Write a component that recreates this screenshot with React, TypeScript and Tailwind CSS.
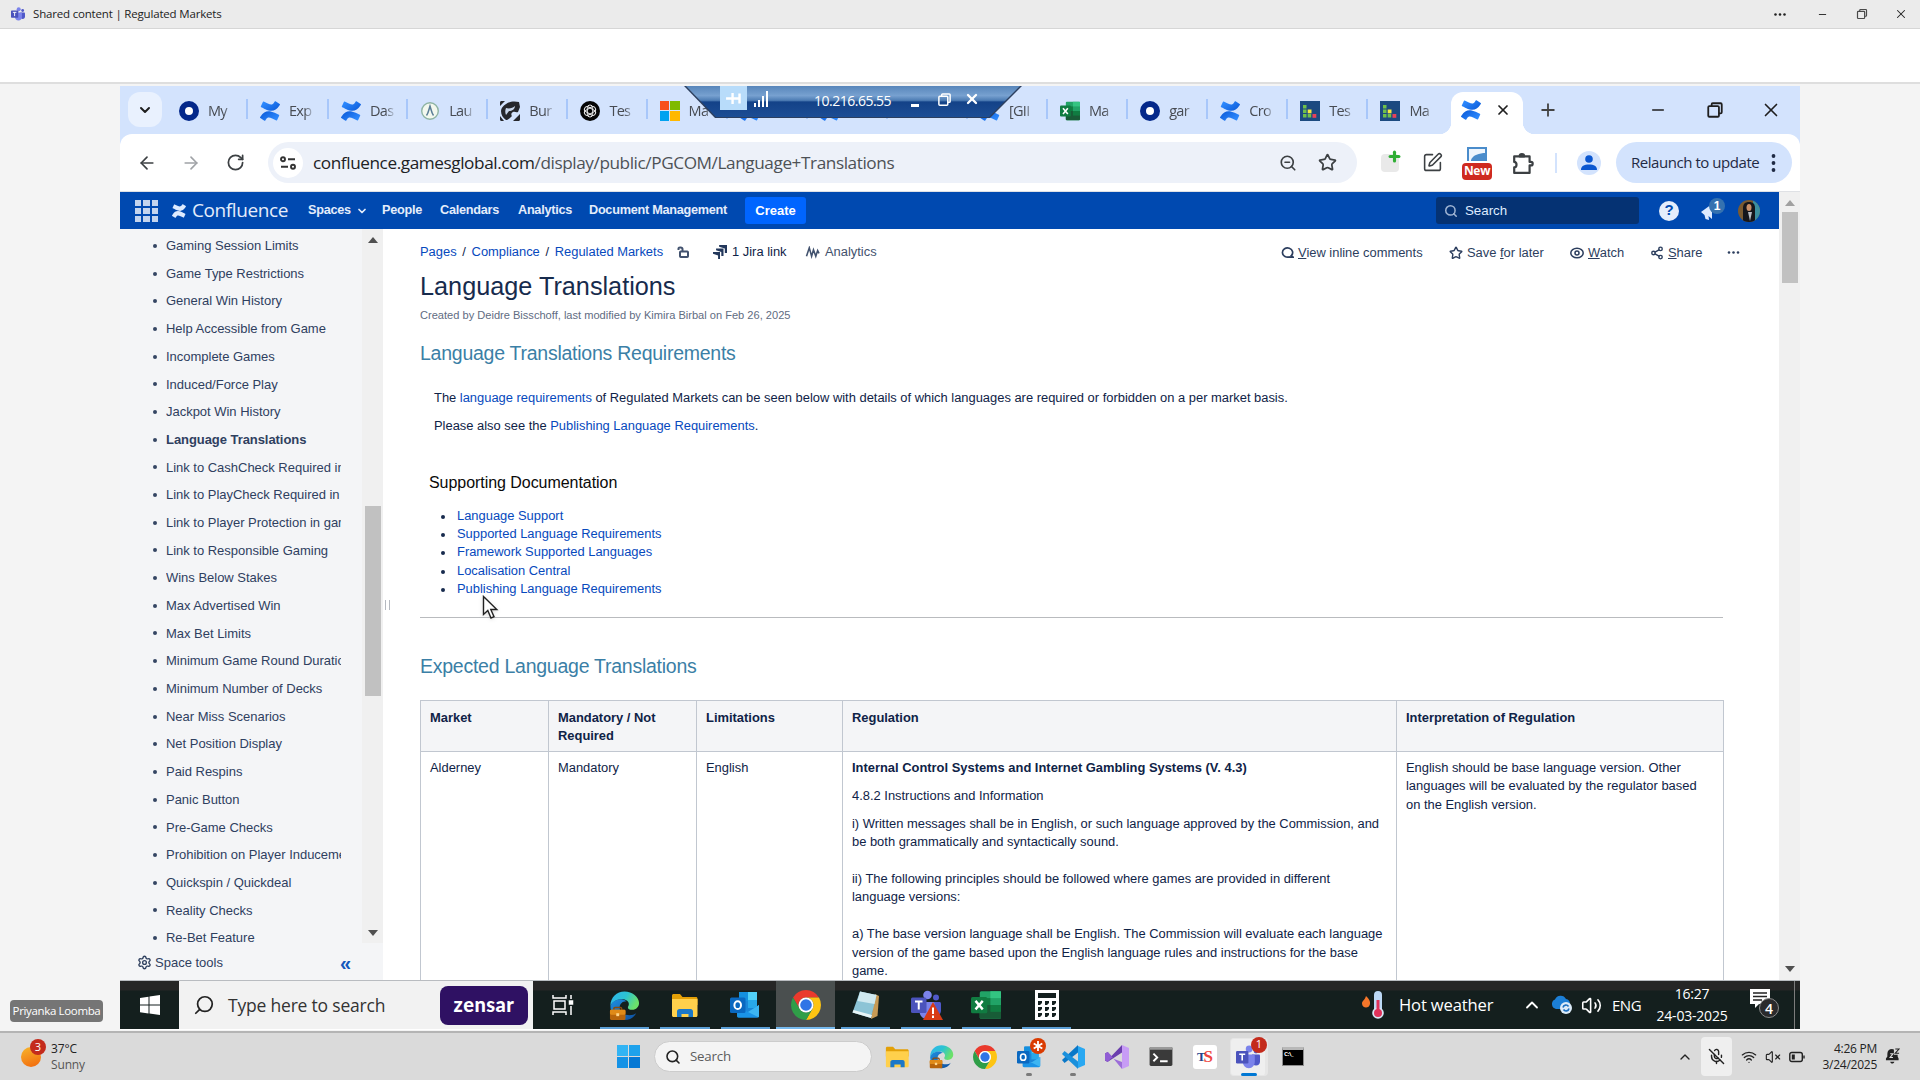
import React from "react";
import {
  ArrowLeft, ArrowRight, RotateCw, Minus, X, Plus, ChevronDown, ChevronUp, Search, Star, ZoomOut,
  SquarePen, Settings, Share2, Wifi, Volume2, VolumeX, MicOff,
} from "lucide-react";

type P = { className?: string };

const CONFLUENCE_A =
  "M.87 18.257c-.248.382-.53.875-.763 1.245a.764.764 0 0 0 .255 1.04l4.965 3.054a.764.764 0 0 0 1.058-.26c.199-.332.454-.763.733-1.221 1.967-3.247 3.945-2.853 7.508-1.146l4.957 2.337a.764.764 0 0 0 1.028-.382l2.364-5.346a.764.764 0 0 0-.382-1 599.851 599.851 0 0 1-4.965-2.361C10.911 10.97 5.224 11.185.87 18.257z";
const CONFLUENCE_B =
  "M23.131 5.743c.249-.405.531-.875.764-1.25a.764.764 0 0 0-.256-1.034L18.675.404a.764.764 0 0 0-1.058.26c-.195.335-.451.763-.734 1.225-1.966 3.246-3.945 2.85-7.508 1.146L4.437.694a.764.764 0 0 0-1.027.382L1.046 6.422a.764.764 0 0 0 .382 1c1.039.49 3.105 1.467 4.965 2.361 6.698 3.246 12.392 3.029 16.738-4.04z";

const ConfluenceIcon = ({ className = "size-5 text-[#2684ff]" }: P) => (
  <svg viewBox="0 0 24 24" className={className} fill="currentColor">
    <path d={CONFLUENCE_A} />
    <path d={CONFLUENCE_B} />
  </svg>
);
const ConfluenceTab = () => (
  <svg viewBox="0 0 24 24" className="size-5">
    <defs>
      <linearGradient id="cfa" x1="1" y1="1" x2="0" y2="0.3">
        <stop offset="0" stopColor="#0a58d6" />
        <stop offset="1" stopColor="#2e8bff" />
      </linearGradient>
      <linearGradient id="cfb" x1="0" y1="0" x2="1" y2="0.7">
        <stop offset="0" stopColor="#0a58d6" />
        <stop offset="1" stopColor="#2e8bff" />
      </linearGradient>
    </defs>
    <path d={CONFLUENCE_A} fill="url(#cfb)" />
    <path d={CONFLUENCE_B} fill="url(#cfa)" />
  </svg>
);
const Ring = () => <div className="size-5 rounded-full border-[6px] border-[#04288a] bg-white" />;
const LauIcon = () => (
  <svg viewBox="0 0 20 20" className="size-5" fill="none">
    <circle cx="10" cy="10" r="8.3" fill="#f3f8ee" stroke="#8fb4a4" strokeWidth="1.4" />
    <path d="M6.500 14.500C8.500 12 9 8 10 5c1 3 1.500 7 3.500 9.500" stroke="#5a7d96" strokeWidth="1.500" />
  </svg>
);
const BurIcon = () => (
  <svg viewBox="0 0 20 20" className="size-5">
    <rect width="20" height="20" rx="2" fill="#d3e3fd" />
    <path d="M0 5V1.500C0 .6.600 0 1.500 0H5L0 5ZM20 13v5.500c0 .9-.600 1.500-1.500 1.500H13l7-7ZM0 15l4 5H1.500C.6 20 0 19.400 0 18.500Z" fill="#26272c" />
    <path d="M6 3c4-3 9-3 13-2l1 5-2 5c-2 1-3-1-5 0s-2 3-1 4c-2 2-4 4-6 4-3-2-5-5-5-9 0-3 2-5 5-7Z" fill="#26272c" />
    <path d="M6 7c3 1 7 0 9-2 0 3-3 5-6 5l-3 4c-1-2-1-5 0-7Z" fill="#c9d6ea" />
  </svg>
);
const GptIcon = () => (
  <svg viewBox="0 0 20 20" className="size-5" fill="none">
    <circle cx="10" cy="10" r="10" fill="#050505" />
    <g stroke="#e8e8e8" strokeWidth="1">
      <rect x="7.300" y="4" width="5.400" height="12" rx="2.700" />
      <rect x="7.300" y="4" width="5.400" height="12" rx="2.700" transform="rotate(60 10 10)" />
      <rect x="7.300" y="4" width="5.400" height="12" rx="2.700" transform="rotate(120 10 10)" />
    </g>
  </svg>
);
const MsIcon = () => (
  <div className="grid size-5 grid-cols-2 gap-[1px]">
    <div className="bg-[#f8501c]" /><div className="bg-[#7fba00]" /><div className="bg-[#00a2f0]" /><div className="bg-[#ffb800]" />
  </div>
);
const SweIcon = () => (
  <svg viewBox="0 0 20 20" className="size-5" strokeWidth="3.500" strokeLinecap="round">
    <path d="M3 15 8 6" stroke="#f0405a" /><path d="M10 15 14 7" stroke="#ffc629" /><path d="M17 14v.5" stroke="#28c76f" />
  </svg>
);
const DashIcon = () => (
  <svg viewBox="0 0 20 20" className="size-5">
    <rect width="20" height="20" fill="#1c4a80" />
    <g fill="#6fc04a">
      <rect x="3" y="4" width="3.500" height="3.500" /><rect x="3" y="8.500" width="3.500" height="3.500" /><rect x="3" y="13" width="3.500" height="3.500" />
      <rect x="7.700" y="13" width="3.500" height="3.500" />
    </g>
    <rect x="7.700" y="8.500" width="3.800" height="3.800" fill="#f4e940" />
    <rect x="12.500" y="13" width="3.800" height="3.800" fill="#e8415a" />
  </svg>
);
const ExcelIcon = ({ className = "size-5" }: P) => (
  <svg viewBox="0 0 24 24" className={className}>
    <rect x="7" y="1" width="17" height="22" rx="1.200" fill="#21a366" />
    <rect x="15.500" y="1" width="8.500" height="5.500" fill="#33c481" />
    <rect x="7" y="6.500" width="8.500" height="5.500" fill="#107c41" />
    <rect x="7" y="12" width="17" height="11" rx="1" fill="#185c37" />
    <rect x="15.500" y="12" width="8.500" height="5.500" fill="#107c41" />
    <rect y="5.500" width="13" height="13" rx="1.200" fill="#107c41" />
    <path d="m3.600 8.700 5.800 6.800M9.400 8.700l-5.800 6.800" stroke="#fff" strokeWidth="1.900" />
  </svg>
);
const Folder = ({ className = "size-7" }: P) => (
  <svg viewBox="0 0 28 28" className={className}>
    <path d="M1 4.500C1 3.700 1.700 3 2.500 3H9l2.500 3H25c.8 0 1.500.7 1.500 1.500V14H1Z" fill="#e3a007" />
    <path d="M1 8h25.500v16.500c0 .8-.7 1.500-1.500 1.500H2.500C1.700 26 1 25.300 1 24.500Z" fill="#ffd04c" />
    <path d="M6 26v-5.500c0-1.400 1-2.500 2.500-2.500h11c1.500 0 2.500 1 2.500 2.500V26h-4.500v-3h-7v3Z" fill="#1b78c8" />
  </svg>
);
const EdgeIcon = ({ className = "size-8" }: P) => (
  <svg viewBox="0 0 32 32" className={className}>
    <defs>
      <linearGradient id="eg1" x1="0" y1="0" x2="1" y2="0.400">
        <stop offset="0" stopColor="#2fb4ee" /><stop offset="0.550" stopColor="#2bc3d2" /><stop offset="1" stopColor="#6be06a" />
      </linearGradient>
      <linearGradient id="eg2" x1="0" y1="0" x2="1" y2="1">
        <stop offset="0" stopColor="#1f8fe0" /><stop offset="1" stopColor="#0d4fa0" />
      </linearGradient>
    </defs>
    <path d="M1.500 16C1.500 7.500 8 1.500 16 1.500S31 7 31 13.500c0 4-3 7-7 7-3 0-4.500-1-4.500-2.500 0-1 1-1.500 1-3.500 0-2.500-2.500-5-6.500-5C7 9.500 2.500 13 1.500 17Z" fill="url(#eg1)" />
    <path d="M1.500 17C2.500 12.500 7 9.500 12.500 9.500c2 0 4 .8 5.500 2-4.500 0-7 3-7 6.500 0 5 5 8 10 8 3 0 5.500-.8 7-2C25.500 28.500 21.500 31 16.500 31 8 31 1.500 25 1.500 17Z" fill="url(#eg2)" />
    <path d="M5 20.500v-1.300c0-.7.500-1.200 1.200-1.200h5.600c.7 0 1.200.500 1.200 1.200v1.300" stroke="#8a4b0c" strokeWidth="1.600" fill="none" />
    <rect x="1" y="20.500" width="16" height="10.500" rx="1.200" fill="#b8650c" />
    <rect x="1" y="20.500" width="16" height="5" rx="1.200" fill="#e08a18" />
    <rect x="7.500" y="24" width="3" height="3" fill="#ffd58a" />
  </svg>
);
const Chrome = ({ className = "size-[30px]" }: P) => (
  <svg viewBox="-24 -24 48 48" className={className}>
    <path d="M-20.780-12A24 24 0 0 1 20.780-12H0A12 12 0 0 0-10.390 6Z" fill="#ea3a2d" />
    <path d="M20.780-12A24 24 0 0 1 0 24L10.390 6A12 12 0 0 0 0-12Z" fill="#fdc413" />
    <path d="M0 24A24 24 0 0 1-20.780-12L-10.390 6A12 12 0 0 0 10.390 6Z" fill="#2f9e48" />
    <circle r="12" fill="#fff" /><circle r="9.300" fill="#2f74e6" />
  </svg>
);
const Outlook = ({ className = "size-[30px]" }: P) => (
  <svg viewBox="0 0 30 30" className={className}>
    <rect x="9" y="2" width="18" height="20" rx="1.500" fill="#1a86d8" />
    <rect x="18" y="2" width="9" height="9" fill="#50d0f8" /><rect x="9" y="2" width="9" height="9" fill="#1490df" /><rect x="18" y="10" width="9" height="8" fill="#28a8ea" />
    <path d="M7 15 18 22l11-7v11c0 1-.7 1.700-1.700 1.700H8.700C7.700 27.700 7 27 7 26Z" fill="#1a93e6" />
    <path d="m18 22 11-7v11c0 .5-.2.900-.5 1.200Z" fill="#3cb5f2" />
    <rect x="0" y="7.500" width="15.500" height="15.500" rx="1.500" fill="#0a68c0" />
    <ellipse cx="7.700" cy="15.200" rx="3.300" ry="3.900" fill="none" stroke="#fff" strokeWidth="2" />
  </svg>
);
const Teams = ({ className = "size-[30px]" }: P) => (
  <svg viewBox="0 0 30 30" className={className}>
    <circle cx="25" cy="7.500" r="3" fill="#5059c9" /><circle cx="16.500" cy="5" r="4.300" fill="#7b83eb" />
    <path d="M20 12h8.500c.8 0 1.500.7 1.500 1.500v7c0 3-2 5-5 5s-5-2-5-5Z" fill="#5059c9" />
    <path d="M9 12h13c.8 0 1.500.7 1.500 1.500V21c0 4.500-3 8-7.500 8s-7.500-3.500-7.500-8Z" fill="#7b83eb" />
    <rect x="0" y="7.500" width="15.500" height="15.500" rx="1.500" fill="#4b53bc" />
    <path d="M4 11.500h7.500M7.750 11.500v8" stroke="#fff" strokeWidth="2" />
  </svg>
);
const Notepad = () => (
  <svg viewBox="0 0 30 30" className="size-[30px]">
    <path d="m24 4 4 2-1.500 20L20 29Z" fill="#c79a55" />
    <path d="M9 1.500 25.500 5 20 28 1.500 22.500Z" fill="#8cc4d6" />
    <path d="M9 1.500 25.500 5l-2 9-17-3Z" fill="#cfe9f0" />
    <path d="M1.500 22.500 20 28l1-3-18.500-5Z" fill="#e8f4f6" />
  </svg>
);
const Calc = () => (
  <svg viewBox="0 0 24 30" className="h-[30px] w-6">
    <rect width="24" height="30" fill="#fff" />
    <rect x="3" y="3" width="18" height="5" fill="#14201f" />
    <g fill="#14201f">
      {[11, 17, 23].map((y) => [3, 10, 17].map((x) => <path key={`${x}-${y}`} d={`M${x} ${y}h4v2l-2 2h-2z`} />))}
    </g>
  </svg>
);
const WinLogo = ({ className = "size-5" }: P) => (
  <svg viewBox="0 0 20 20" className={className} fill="#fff">
    <path d="M0 3 8.500 1.700V9.500H0ZM9.500 1.500 20 0v9.500H9.500ZM0 10.500h8.500v7.900L0 17.200ZM9.500 10.500H20V20L9.500 18.500Z" />
  </svg>
);
const Restore = ({ className = "size-4" }: P) => (
  <svg viewBox="0 0 16 16" className={className} fill="none" stroke="currentColor" strokeWidth="1.600">
    <rect x="2" y="4.500" width="9.500" height="9.500" rx="1" /><path d="M5 4.500V3c0-.6.400-1 1-1h7c.6 0 1 .4 1 1v7c0 .6-.4 1-1 1h-1.500" />
  </svg>
);
const PuzzleIcon = ({ className = "size-5" }: P) => (
  <svg viewBox="0 0 20 20" className={className} fill="none" stroke="currentColor" strokeWidth="2" strokeLinejoin="round">
    <path d="M2 4h14v5h1.200a1.300 1.300 0 0 1 0 3.200H16V19H2v-5c2.800-.3 2.800-4.700 0-5Z" />
    <path d="M7 4a2 2 0 0 1 4 0Z" fill="currentColor" />
  </svg>
);
const Dots = ({ className }: P) => (
  <svg viewBox="0 0 16 4" className={className} fill="currentColor"><circle cx="2" cy="2" r="1.700" /><circle cx="8" cy="2" r="1.700" /><circle cx="14" cy="2" r="1.700" /></svg>
);

const TABS: [React.ReactNode, string][] = [
  [<Ring />, "My"], [<ConfluenceTab />, "Exp"], [<ConfluenceTab />, "Das"], [<LauIcon />, "Lau"], [<BurIcon />, "Bur"],
  [<GptIcon />, "Tes"], [<MsIcon />, "Ma"], [<ConfluenceTab />, "Sch"], [<ConfluenceTab />, "Rat"], [<SweIcon />, "Swe"],
  [<ConfluenceTab />, "[GII"], [<ExcelIcon />, "Ma"], [<Ring />, "gar"], [<ConfluenceTab />, "Cro"], [<DashIcon />, "Tes"], [<DashIcon />, "Ma"],
];

function TabStrip() {
  return (
    <div className="relative flex h-12 bg-[#d3e3fd] pl-2">
      <div className="mt-[6px] flex h-[35px] w-[34px] items-center justify-center rounded-xl bg-[#e9f1fe]">
        <ChevronDown className="size-4 text-[#1f1f1f]" strokeWidth={3} />
      </div>
      <div className="ml-[5px] flex h-12">
        {TABS.map(([icon, label], i) => (
          <div
            key={i}
            className={
              i < 2
                ? "relative flex w-[81px] items-center pl-3 pt-[1px]"
                : i === 2 || i === 5
                  ? "relative flex w-[79.200px] items-center pl-3 pt-[1px]"
                  : "relative flex w-[80.100px] items-center pl-3 pt-[1px]"
            }
          >
            <div className="size-5 shrink-0">{icon}</div>
            <div className="ml-[9px] w-[26px] overflow-hidden whitespace-nowrap text-[14.500px] tracking-[-0.700px] text-[#474b52] [mask-image:linear-gradient(90deg,#000_60%,transparent)]">{label}</div>
            {i < 15 && <div className="absolute right-0 top-[13px] h-5 w-[2px] bg-[#a8c7fa]" />}
          </div>
        ))}
      </div>
      <div className="relative ml-[2px] mt-[6px] flex h-[42px] w-[72px] rounded-t-xl bg-white pl-[10px] pt-2">
        <ConfluenceTab />
        <X className="ml-[14px] mt-[2px] size-4 text-[#1f1f1f]" strokeWidth={2.600} />
        <div className="absolute -left-3 bottom-0 size-3 bg-[radial-gradient(circle_at_0_0,transparent_12px,#fff_12.5px)]" />
        <div className="absolute -right-3 bottom-0 size-3 bg-[radial-gradient(circle_at_100%_0,transparent_12px,#fff_12.5px)]" />
      </div>
      <div className="flex flex-1 items-start pt-[14px] text-[#1f1f1f]">
        <Plus className="ml-[15px] size-5 text-[#444]" strokeWidth={2.200} />
        <Minus className="ml-[91px] mt-[1px] size-[18px]" strokeWidth={2.200} />
        <Restore className="ml-[39px] mt-[1px] size-[18px]" />
        <X className="ml-[36px] -mt-[1px] size-[22px]" strokeWidth={1.800} />
      </div>
      <RemoteBar />
    </div>
  );
}

function RemoteBar() {
  return (
    <div className="absolute left-[564px] top-0 h-8 w-[338px]">
      <div className="absolute inset-0 bg-[#2c3f5e] [clip-path:polygon(0_0,100%_0,306px_100%,31px_100%)]" />
      <div className="absolute inset-0 bg-[linear-gradient(#5a89bf_0%,#7ba6d6_30%,#4f7fb8_45%,#12428a_50%,#1c4f98_100%)] opacity-95 [clip-path:polygon(2px_0,336px_0,305px_31px,32px_31px)]" />
      <div className="relative flex h-[26px] items-center text-white">
        <div className="ml-9 flex h-6 w-[27px] items-center justify-center self-start bg-[#b8dcfa]">
          <svg viewBox="0 0 18 14" className="h-[13px] w-[17px]" fill="none" stroke="#fff" strokeWidth="2.600"><path d="M1 7h6M8 1v12M8 7h7M15.500 1.500v11" /></svg>
        </div>
        <svg viewBox="0 0 14 16" className="ml-[7px] h-4 w-[14px]" fill="#fff"><path d="M0 12h2v4H0zM4 9h2v7H4zM8 5h2v11H8zM12 0h2v16h-2z" /></svg>
        <div className="ml-[46px] mt-[3px] w-[80px] whitespace-nowrap text-[14px] tracking-[-0.500px]">10.216.65.55</div>
        <div className="ml-[17px] mt-[12px] h-[3px] w-2 bg-white" />
        <Restore className="ml-[18px] size-[15px]" />
        <X className="ml-[12px] size-4" strokeWidth={3.500} />
      </div>
    </div>
  );
}

function Toolbar() {
  return (
    <div className="bg-[#d3e3fd]">
      <div className="flex h-[57px] items-center rounded-t-xl bg-white pl-[17px] text-[#3c4043]">
        <ArrowLeft className="size-5" />
        <ArrowRight className="ml-6 size-5 text-[#a0a3a7]" />
        <RotateCw className="ml-[25px] size-[19px]" strokeWidth={2.200} />
        <div className="ml-[23px] flex h-[41px] w-[1089px] items-center rounded-full bg-[#edf1f9] pl-[5px]">
          <div className="flex h-[30px] w-[30px] items-center justify-center rounded-full bg-white">
            <svg viewBox="0 0 16 14" className="h-[14px] w-4" fill="none" stroke="#333" strokeWidth="1.900"><circle cx="3" cy="3.200" r="2" /><path d="M8 3.200h7M1 10.800h7" /><circle cx="13" cy="10.800" r="2" /></svg>
          </div>
          <div className="ml-[10px] w-[966px] whitespace-nowrap text-[17.200px] tracking-[-0.420px] text-[#4d5156]">
            <span className="text-[#202124]">confluence.gamesglobal.com</span>/display/public/PGCOM/Language+Translations
          </div>
          <ZoomOut className="size-[18px]" strokeWidth={2.200} />
          <Star className="ml-[21px] size-[19px]" strokeWidth={2.200} />
        </div>
        <div className="relative ml-[24px] h-[18px] w-[18px] rounded bg-[#e9e9e9]">
          <Plus className="absolute -top-[5px] left-[6px] size-[15px] text-[#2fae34]" strokeWidth={5} />
        </div>
        <SquarePen className="ml-[23px] size-[21px]" strokeWidth={1.800} />
        <div className="relative ml-[19px] h-[34px] w-[30px]">
          <svg viewBox="0 0 20 14" className="mx-auto mt-[1px] h-[14px] w-5"><rect x="1" y="1" width="18" height="14" fill="#eef5fc" stroke="#4a8ccb" strokeWidth="2" /><path d="M4 13c2-5 8-7 15-7v8H4Z" fill="#4a8ccb" /></svg>
          <div className="absolute bottom-0 left-0 flex h-[17px] w-[30px] items-center justify-center rounded bg-[#cf2a20] text-[12px] font-bold tracking-[-0.300px] text-white">New</div>
        </div>
        <PuzzleIcon className="ml-[20px] size-[22px]" />
        <div className="ml-[21px] h-5 w-[2px] bg-[#d3e3fd]" />
        <div className="ml-[20px] flex size-[24px] items-center justify-center rounded-full bg-[#d3e3fd]">
          <svg viewBox="0 0 16 16" className="size-4" fill="#0b57d0"><circle cx="8" cy="4" r="3.800" /><path d="M0 15c0-4 3-5.500 8-5.500s8 1.500 8 5.500z" /></svg>
        </div>
        <div className="ml-[15px] flex h-[41px] w-[176px] items-center rounded-full bg-[#d3e3fd] pl-[15px] text-[15px] tracking-[-0.450px] text-[#1f2a44]">
          <span className="w-[140px] whitespace-nowrap">Relaunch to update</span>
          <svg viewBox="0 0 4 18" className="h-[18px] w-[5px]" fill="#1f2a44"><circle cx="2" cy="2" r="1.900" /><circle cx="2" cy="9" r="1.900" /><circle cx="2" cy="16" r="1.900" /></svg>
        </div>
      </div>
    </div>
  );
}

function ConfluenceHeader() {
  return (
    <div className="flex h-[37px] items-center bg-[#0049b0] pl-[15px] font-['Liberation_Sans',sans-serif] text-[12.700px] font-bold tracking-[-0.270px] text-[#e4edfb]">
      <div className="grid w-[23px] grid-cols-3 gap-x-[2px] gap-y-[2px]">
        {Array.from({ length: 9 }, (_, i) => <div key={i} className="h-[6px] bg-[#c3d4ee]" />)}
      </div>
      <ConfluenceIcon className="ml-[14px] size-[14px] text-[#deebff]" />
      <div className="ml-[6px] w-[116px] font-['Open_Sans',sans-serif] text-[19px] font-normal tracking-[-0.400px]">Confluence</div>
      <div className="w-[48px]">Spaces</div>
      <ChevronDown className="size-3 w-[12px]" strokeWidth={3.500} />
      <div className="ml-[14px] w-[58px]">People</div>
      <div className="w-[78px]">Calendars</div>
      <div className="w-[71px]">Analytics</div>
      <div className="w-[156px] whitespace-nowrap">Document Management</div>
      <div className="flex h-[27px] w-[61px] items-center justify-center rounded-[3px] bg-[#0065ff] text-[13px] tracking-normal text-white">Create</div>
      <div className="ml-auto flex h-[27px] w-[203px] items-center rounded-[3px] bg-[#053273] pl-2 font-normal tracking-normal">
        <Search className="size-[14px] text-[#9fb4d3]" strokeWidth={2.600} />
        <span className="ml-[7px] text-[13.300px] text-[#deebff]">Search</span>
      </div>
      <div className="ml-5 flex size-5 items-center justify-center rounded-full bg-[#e4edfb] text-[15px] text-[#0049b0]">?</div>
      <div className="relative ml-[22px] h-7 w-7">
        <svg viewBox="0 0 18 18" className="mt-[6px] size-[18px]" fill="#deebff"><path d="M0 9 11 1v15l-3.500-3 .5 4-3.500-1L3.500 12Z" /></svg>
        <div className="absolute left-[8px] top-[1px] flex size-[16px] items-center justify-center rounded-full bg-[#3572b0] text-[12px] text-white">1</div>
      </div>
      <div className="ml-[9px] mr-[19px] size-[22px] overflow-hidden rounded-full">
        <svg viewBox="0 0 22 22" className="size-full">
          <rect width="22" height="22" fill="#7a5a30" /><rect x="15" width="7" height="22" fill="#3b8fa0" /><path d="M5 22V8c0-4 2-6 6-6s6 2 6 6v14Z" fill="#15161b" /><ellipse cx="11" cy="7.500" rx="2.500" ry="3.500" fill="#c98f68" /><path d="m10 12 2 9 2-9z" fill="#b9bdc4" />
        </svg>
      </div>
    </div>
  );
}

const SIDE = [
  "Gaming Session Limits", "Game Type Restrictions", "General Win History", "Help Accessible from Game", "Incomplete Games",
  "Induced/Force Play", "Jackpot Win History", "Language Translations", "Link to CashCheck Required in Game", "Link to PlayCheck Required in Game",
  "Link to Player Protection in game", "Link to Responsible Gaming", "Wins Below Stakes", "Max Advertised Win", "Max Bet Limits",
  "Minimum Game Round Duration", "Minimum Number of Decks", "Near Miss Scenarios", "Net Position Display", "Paid Respins",
  "Panic Button", "Pre-Game Checks", "Prohibition on Player Inducements", "Quickspin / Quickdeal", "Reality Checks", "Re-Bet Feature",
];

function Sidebar() {
  return (
    <div className="flex w-[263px] shrink-0 flex-col bg-[#f4f5f7] text-[#2f405f]">
      <div className="flex h-[714px] overflow-hidden">
        <ul className="w-[242px] overflow-hidden pl-[33px] pt-[3px]">
          {SIDE.map((s, i) => (
            <li key={s} className="flex h-[27.700px] items-center">
              <span className="size-[4px] shrink-0 rounded-full bg-[#344563]" />
              <span className={i === 7 ? "ml-[9px] w-[175px] overflow-hidden whitespace-nowrap font-bold tracking-[-0.060px]" : "ml-[9px] w-[175px] overflow-hidden whitespace-nowrap tracking-[-0.020px]"}>{s}</span>
            </li>
          ))}
        </ul>
        <div className="flex w-[21px] flex-col items-center bg-[#f0f0f0]">
          <div className="mt-2 border-x-[5px] border-b-[6px] border-x-transparent border-b-[#505050]" />
          <div className="ml-[1px] mt-[263px] h-[190px] w-4 bg-[#c1c1c1]" />
          <div className="mt-[234px] border-x-[5px] border-t-[6px] border-x-transparent border-t-[#505050]" />
        </div>
      </div>
      <div className="flex h-[37px] items-center pl-[17px] pt-[2px]">
        <Settings className="size-[15px]" strokeWidth={2.200} />
        <span className="ml-[3px] w-[185px]">Space tools</span>
        <span className="text-[20px] font-bold leading-none text-[#1558bc]">«</span>
      </div>
    </div>
  );
}

const A = ({ children }: { children: React.ReactNode }) => <a className="text-[#0649bd]">{children}</a>;

function Article() {
  return (
    <div className="flex h-[751px] flex-1 overflow-hidden bg-white text-[12.910px]">
      <div className="flex w-[37px] shrink-0 items-center justify-start pl-[2px]">
        <div className="h-[10px] w-[5px] border-x border-[#b5b9c0]" />
      </div>
      <div className="w-[1303px] shrink-0 text-[#0f2347]">
        <div className="flex h-[46px] items-center">
          <div className="flex w-[296px] items-center whitespace-nowrap">
            <A>Pages</A><span className="w-[15px] text-center">/</span><A>Compliance</A><span className="w-[15px] text-center">/</span><A>Regulated Markets</A>
            <svg viewBox="0 0 12 12" className="ml-[14px] size-3 text-[#42526e]" fill="none" stroke="currentColor" strokeWidth="2"><path d="M1.500 4V2.500C1.500 1 5.500 1 5.500 3v2" /><rect x="3" y="5.500" width="8" height="5.500" rx="0.800" /></svg>
          </div>
          <svg viewBox="0 0 16 16" className="ml-[-3px] size-[14px]" fill="#23385c"><path d="M7 0h9v9h-2.500V4L7 2zM3.500 4h8.500v8.500H9.500V8l-6-2zM0 8h8v8H5.800v-4L0 10z" /></svg>
          <span className="ml-[5px] w-[73px]">1 Jira link</span>
          <svg viewBox="0 0 16 14" className="h-[13px] w-[16px]" fill="none" stroke="#42526e" strokeWidth="1.700"><path d="M1 11 4 2l2.500 9L8.500 4l2.500 7 2-6 1.500 3" /></svg>
          <span className="ml-1 text-[#42526e]">Analytics</span>
          <div className="ml-auto flex items-center whitespace-nowrap pt-[2px] text-[#2c3e5e]">
            <svg viewBox="0 0 14 14" className="size-[13px]" fill="none" stroke="currentColor" strokeWidth="1.800"><path d="M9.500 11.500A5.500 5 0 1 1 11 10.500L13 12H8" /></svg>
            <span className="ml-[4px] w-[151px]"><u>V</u>iew inline comments</span>
            <Star className="size-[14px]" strokeWidth={2.400} />
            <span className="ml-[4px] w-[103px]">Save <u>f</u>or later</span>
            <svg viewBox="0 0 14 12" className="h-3 w-[14px]" fill="none" stroke="currentColor" strokeWidth="1.500"><ellipse cx="7" cy="6" rx="6.200" ry="4.700" /><circle cx="7" cy="6" r="2" /></svg>
            <span className="ml-1 w-[62px]"><u>W</u>atch</span>
            <Share2 className="size-[14px]" strokeWidth={2.400} />
            <span className="ml-1 w-[59px]"><u>S</u>hare</span>
            <Dots className="mr-[-17px] h-[3px] w-[13px]" />
          </div>
        </div>
        <h1 className="mt-[-4px] h-[32px] whitespace-nowrap text-[25.250px] leading-[30px] text-[#172b4d]">Language Translations</h1>
        <div className="mt-[4px] text-[11.080px] leading-4 text-[#5f6c82]">Created by Deidre Bisschoff, last modified by Kimira Birbal on Feb 26, 2025</div>
        <h2 className="mt-[14px] h-8 whitespace-nowrap text-[19.500px] leading-8 tracking-[-0.250px] text-[#3b7fa6]">Language Translations Requirements</h2>
        <div className="pl-[14px]">
          <p className="mt-[15px] h-[27.500px] leading-[27px]">The <A>language requirements</A> of Regulated Markets can be seen below with details of which languages are required or forbidden on a per market basis.</p>
          <p className="h-[27.500px] leading-[27px]">Please also see the <A>Publishing Language Requirements</A>.</p>
        </div>
        <h3 className="ml-[9px] mt-[34px] h-[20px] text-[16px] leading-5 tracking-[-0.050px] text-[#0a0a0a]">Supporting Documentation</h3>
        <ul className="mt-[13px]">
          {["Language Support", "Supported Language Requirements", "Framework Supported Languages", "Localisation Central", "Publishing Language Requirements"].map((t) => (
            <li key={t} className="flex h-[18.400px] items-center pl-[21px]">
              <span className="mt-[3px] size-1 rounded-full bg-[#172b4d]" />
              <span className="ml-3"><A>{t}</A></span>
            </li>
          ))}
        </ul>
        <div className="mt-[19px] h-px bg-[#b9bbbe]" />
        <h2 className="mt-[32px] h-8 text-[19.500px] leading-8 tracking-[-0.250px] text-[#3b7fa6]">Expected Language Translations</h2>
        <table className="mt-[18px] w-full table-fixed border-collapse text-left align-top leading-[18.400px] [&_td]:border [&_td]:border-[#c1c7d0] [&_td]:px-[9px] [&_td]:pt-[7px] [&_td]:align-top [&_th]:border [&_th]:border-[#c1c7d0] [&_th]:px-[9px] [&_th]:align-top [&_th]:pt-[8px]">
          <colgroup>
            <col className="w-[128px]" /><col className="w-[148px]" /><col className="w-[146px]" /><col className="w-[554px]" /><col className="w-[327px]" />
          </colgroup>
          <thead>
            <tr className="h-[51px] bg-[#f4f5f7]">
              <th>Market</th><th>Mandatory / Not Required</th><th>Limitations</th><th>Regulation</th><th>Interpretation of Regulation</th>
            </tr>
          </thead>
          <tbody>
            <tr className="h-[300px]">
              <td>Alderney</td>
              <td>Mandatory</td>
              <td>English</td>
              <td>
                <div className="whitespace-nowrap font-bold">Internal Control Systems and Internet Gambling Systems (V. 4.3)</div>
                <div className="mt-[9.500px]">4.8.2 Instructions and Information</div>
                <div className="mt-[9.500px] whitespace-nowrap">i) Written messages shall be in English, or such language approved by the Commission, and<br />be both grammatically and syntactically sound.</div>
                <div className="mt-[18.400px] whitespace-nowrap">ii) The following principles should be followed where games are provided in different<br />language versions:</div>
                <div className="mt-[18.400px] whitespace-nowrap">a) The base version language shall be English. The Commission will evaluate each language<br />version of the game based upon the English language rules and instructions for the base<br />game.</div>
              </td>
              <td className="whitespace-nowrap">English should be base language version. Other<br />languages will be evaluated by the regulator based<br />on the English version.</td>
            </tr>
          </tbody>
        </table>
      </div>
    </div>
  );
}

const Cursor = () => (
  <svg viewBox="0 0 18 26" className="absolute left-[482px] top-[595px] h-[26px] w-[18px] drop-shadow">
    <path d="M1.500 1.500v18l4.300-4 3.200 7.500 3-1.300-3.200-7.200h6Z" fill="#fff" stroke="#222" strokeWidth="1.400" />
  </svg>
);

function InnerTaskbar() {
  const apps: [React.ReactNode, boolean][] = [
    [<EdgeIcon className="size-[31px]" />, false], [<Folder className="size-[28px]" />, false], [<Outlook />, false], [<Chrome />, true],
    [<Notepad />, false],
    [<div className="relative"><Teams /><svg viewBox="0 0 20 18" className="absolute left-[12px] top-[12px] h-[18px] w-[20px]"><path d="m10 0 10 18H0Z" fill="#d83b16" /><path d="M10 5.500v6.500M10 13.500V16" stroke="#fff" strokeWidth="2" /></svg></div>, false],
    [<ExcelIcon className="size-[30px]" />, false], [<Calc />, false],
  ];
  return (
    <div className="flex h-[49px] border-t border-[#b9bcc0] bg-[linear-gradient(#262626_9px,#141f1e_10px)] text-white">
      <div className="flex w-[59px] items-center justify-center"><WinLogo /></div>
      <div className="flex w-[354px] items-center bg-[#f2f2f2] text-[#333]">
        <Search className="ml-[14px] size-[22px] -scale-x-100 text-[#222]" strokeWidth={1.900} />
        <span className="ml-[13px] w-[212px] whitespace-nowrap text-[17.500px] tracking-[-0.200px]">Type here to search</span>
        <div className="flex h-[39px] w-[88px] items-center justify-center rounded-lg bg-[#2f1163] pb-[3px] font-[Lato] text-[20px] font-black tracking-[0.500px] text-white">zensar</div>
      </div>
      <div className="flex w-[62px] items-center justify-center pr-[3px]">
        <svg viewBox="0 0 22 20" className="h-5 w-[22px]" fill="none" stroke="#fff" strokeWidth="1.500"><path d="M1 0v3h13V0M1 20v-3h13v3M2 6h11v8H2ZM19 0v4M19 11v9" /><path d="M17.500 6h3v3h-3z" fill="#fff" /></svg>
      </div>
      <div className="flex">
        {apps.map(([icon, active], i) => (
          <div key={i} className={active ? "relative mr-[1px] flex w-[59.300px] items-center justify-center bg-[#4a4f4f]" : "relative mr-[1px] flex w-[59.300px] items-center justify-center"}>
            {icon}
            <div className={active ? "absolute inset-x-0 bottom-0 h-[2px] bg-[#76b9ed]" : "absolute inset-x-[5px] bottom-0 h-[2px] bg-[#5c9fd6]"} />
          </div>
        ))}
      </div>
      <div className="ml-auto flex items-center">
        <svg viewBox="0 0 24 28" className="h-7 w-6">
          <path d="M5 5c3 3 4.500 5 4 8-.5 2.500-2 3.500-4 3.500S1 15 1 12.500C1 10 4 9 5 5z" fill="#f5762a" />
          <rect x="13" y="0" width="8" height="22" rx="4" fill="#bcd8f5" /><circle cx="17" cy="22" r="5.800" fill="#d8e6f5" /><circle cx="17" cy="22" r="4" fill="#e0315a" /><path d="M17 9v12" stroke="#e0315a" strokeWidth="3" />
        </svg>
        <span className="ml-[14px] w-[123px] whitespace-nowrap text-[16.600px] tracking-[-0.150px]">Hot weather</span>
        <ChevronUp className="size-[20px]" strokeWidth={2.200} />
        <svg viewBox="0 0 22 20" className="ml-[9px] h-5 w-[22px]"><path d="M5 14a5 5 0 0 1-1-9.500A6 6 0 0 1 15 4a5 5 0 0 1 4 5v5z" fill="#1c7fd6" /><circle cx="15" cy="13" r="6" fill="#dcebf8" /><path d="M12 12.500a3 3 0 0 1 5.500-1M18 13.500a3 3 0 0 1-5.500 1" stroke="#1c6fc0" strokeWidth="1.600" fill="none" /></svg>
        <Volume2 className="ml-[8px] size-[21px]" strokeWidth={1.800} />
        <span className="ml-[10px] w-[37px] text-[15px] tracking-[-0.500px]">ENG</span>
        <div className="w-[86px] text-center text-[14px] leading-[22px] tracking-[-0.200px]">16:27<br /><span className="whitespace-nowrap">24-03-2025</span></div>
        <div className="relative ml-[15px] h-8 w-[44px]">
          <svg viewBox="0 0 20 20" className="h-5 w-5"><path d="M0 0h20v15H9l-4 4v-4H0Z" fill="#fff" /><path d="M3 4h14M3 7.500h14M3 11h9" stroke="#222" strokeWidth="1.500" /></svg>
          <div className="absolute left-[9px] top-[9px] flex size-[20px] items-center justify-center rounded-full border border-[#8a8a8a] bg-[#2a2a2c] text-[14px] font-semibold">4</div>
        </div>
        <div className="mr-[5px] h-12 w-px bg-[#7c7c7c]" />
      </div>
    </div>
  );
}

const Cell = ({ children, dot }: { children: React.ReactNode; dot?: boolean }) => (
  <div className="relative flex h-12 w-[44px] items-center justify-center">
    {children}
    {dot && <div className="absolute bottom-[5px] h-[3px] w-[6px] rounded-full bg-[#7a7a7a]" />}
  </div>
);

function OuterTaskbar() {
  return (
    <div className="flex h-[49px] items-center border-t-2 border-[#b4b4b4] bg-[#dadada] text-[12px] text-[#222]">
      <div className="relative ml-5 h-[31px] w-[31px]">
        <div className="absolute left-[1px] top-[6px] h-[20px] w-[20px] rounded-full bg-[linear-gradient(160deg,#f7b62c,#f2660c)]" />
        <div className="absolute left-[10px] top-[-2px] flex size-4 items-center justify-center rounded-full bg-[#c42b1c] text-[11px] text-white">3</div>
      </div>
      <div className="w-[566px] leading-4 tracking-[-0.150px]">37°C<br /><span className="text-[#555]">Sunny</span></div>
      <div className="grid size-[23px] grid-cols-2 gap-[1px]">
        <div className="bg-[#32b4f4]" /><div className="bg-[#1ea2ec]" /><div className="bg-[#1492e6]" /><div className="bg-[#0678d4]" />
      </div>
      <div className="ml-[14px] flex h-[31px] w-[218px] items-center rounded-full border border-[#cccccc] bg-[#f4f4f4] pl-[10px]">
        <Search className="size-[16px] text-[#222]" strokeWidth={2.400} />
        <span className="ml-[9px] text-[13.300px] tracking-[-0.200px] text-[#5c5c5c]">Search</span>
      </div>
      <div className="ml-[3px] flex">
        <Cell><Folder className="size-[25px]" /></Cell>
        <Cell><EdgeIcon className="size-[25px]" /></Cell>
        <Cell><Chrome className="size-[24px]" /></Cell>
        <Cell dot>
          <Outlook className="size-6" />
          <div className="absolute right-[5px] top-[5px] flex size-4 items-center justify-center rounded-full bg-[#da3b01]">
            <svg viewBox="0 0 10 10" className="size-[10px]" stroke="#fff" strokeWidth="1.800"><path d="M5 0v10M.7 2.500l8.600 5M9.300 2.500l-8.600 5" /></svg>
          </div>
        </Cell>
        <Cell dot>
          <svg viewBox="0 0 24 24" className="size-6"><path d="m17 1 7 3v16l-7 3Z" fill="#29a8f2" /><path d="M17 0 1 15l2.500 3L17 7.500Z" fill="#0a78c8" /><path d="M17 24 1 9l2.500-3L17 16.500Z" fill="#1a90dc" /></svg>
        </Cell>
        <Cell>
          <svg viewBox="0 0 24 24" className="size-6"><path d="m17 0 7 3v18l-7 3Z" fill="#c79cf5" /><path d="M17 0 6.500 11 2.500 7 0 8.500v7L2.500 17 17 7.500Z" fill="#6b3fae" /><path d="m17 24-14-17L0 8.500V15l2.500 2 4-4L17 17Z" fill="#9560d8" opacity="0.900" /></svg>
        </Cell>
        <Cell>
          <svg viewBox="0 0 24 20" className="h-[19px] w-6"><rect width="24" height="20" rx="1.500" fill="#3a3a3a" /><rect width="24" height="3" rx="1" fill="#9a9a9a" /><path d="m4 7 4 4-4 4M11 15h8" stroke="#fff" strokeWidth="2" fill="none" /></svg>
        </Cell>
        <Cell>
          <div className="flex size-[24px] items-center justify-center rounded-[3px] bg-white font-['Liberation_Serif',serif] font-bold">
            <span className="text-[13px] leading-none text-[#23448c]">T</span>
            <span className="-ml-[2px] text-[17px] leading-none text-[#ee4540]">S</span>
          </div>
        </Cell>
        <Cell>
          <div className="flex h-[38px] w-[38px] items-center justify-center rounded border border-r-[3px] border-[#e6e6e6] bg-[#efefef]"><Teams className="size-6" /></div>
          <div className="absolute right-[4px] top-[4px] flex size-4 items-center justify-center rounded-full bg-[#c42b1c] text-[11px] text-white">1</div>
          <div className="absolute bottom-[5px] h-[3px] w-4 rounded-full bg-[#0078d4]" />
        </Cell>
        <Cell>
          <div className="h-[19px] w-[22px] border border-[#8d8d8d] border-t-[3px] border-t-[#b8b8b8] bg-black pl-[1px] text-[6px] font-bold leading-[8px] tracking-[-0.300px] text-white">C:\_</div>
        </Cell>
      </div>
      <div className="ml-auto flex items-center">
        <ChevronUp className="size-4" strokeWidth={2} />
        <div className="ml-[8px] flex h-[39px] w-[31px] items-center justify-center rounded bg-[#efefef]"><MicOff className="size-[17px]" strokeWidth={2} /></div>
        <Wifi className="ml-[9px] size-[16px]" strokeWidth={2} />
        <VolumeX className="ml-[8px] size-[16px]" strokeWidth={1.700} />
        <svg viewBox="0 0 16 12" className="ml-[8px] h-[12px] w-4" fill="none" stroke="#222" strokeWidth="1.400"><rect x="0.800" y="1.500" width="12.500" height="9" rx="2" /><path d="M15 4.500v3" /><rect x="2.800" y="3.500" width="3" height="5" fill="#222" stroke="none" /></svg>
        <div className="w-[72px] text-right leading-4 tracking-[-0.250px]">4:26 PM<br />3/24/2025</div>
        <svg viewBox="0 0 16 18" className="ml-[8px] mr-[20px] h-[17px] w-[15px]"><path d="M1 13V11l1.500-2V6c0-3 2-5 5-5l2 .5V7h4v2l1 2v2ZM5.500 14.500h4.500c-.5 2.500-4 2.500-4.500 0z" fill="#222" /><path d="M11 1h4l-4 4.500h4" stroke="#222" strokeWidth="1.200" fill="none" /><path d="M5.500 6h3l-3 4h3" stroke="#ddd" strokeWidth="1.200" fill="none" /></svg>
      </div>
    </div>
  );
}

export default function App() {
  return (
    <div className="relative flex h-[1080px] w-[1920px] flex-col overflow-hidden bg-[#f4f4f4] font-['Open_Sans','Noto_Sans',sans-serif]">
      <div className="flex h-[29px] items-center border-b border-[#d6d6d6] bg-[#ebebeb] text-[#222]">
        <Teams className="ml-[11px] size-[14px]" />
        <span className="ml-[8px] text-[11.500px] tracking-[-0.180px]">Shared content | Regulated Markets</span>
        <Dots className="ml-auto h-[3px] w-[12px]" />
        <Minus className="ml-[31px] size-[11px]" strokeWidth={2} />
        <Restore className="ml-[28px] size-[12px] opacity-80" />
        <X className="ml-[26px] mr-[12px] size-[14px]" strokeWidth={1.800} />
      </div>
      <div className="h-[55px] border-b-2 border-[#dedede] bg-white" />
      <div className="mx-[120px] mt-[2px] flex h-[944px] flex-col bg-white">
        <TabStrip />
        <Toolbar />
        <div className="flex h-[789px] border-t border-[#dfe1e5]">
          <div className="flex w-[1659px] flex-col">
            <ConfluenceHeader />
            <div className="flex h-[751px] font-['Liberation_Sans',sans-serif] text-[13px]">
              <Sidebar />
              <Article />
            </div>
          </div>
          <div className="flex flex-1 flex-col items-center bg-[#f0f0f0]">
            <div className="mt-2 border-x-[5px] border-b-[6px] border-x-transparent border-b-[#a0a0a0]" />
            <div className="mt-[6px] h-[71px] w-4 bg-[#c1c1c1]" />
            <div className="mt-[683px] border-x-[5px] border-t-[6px] border-x-transparent border-t-[#505050]" />
          </div>
        </div>
        <InnerTaskbar />
      </div>
      <div className="mt-auto"><OuterTaskbar /></div>
      <div className="absolute left-[10px] top-[1000px] flex h-[22px] w-[93px] items-center justify-center whitespace-nowrap rounded bg-[#757575] text-[11.500px] tracking-[-0.350px] text-white">Priyanka Loomba</div>
      <Cursor />
    </div>
  );
}
